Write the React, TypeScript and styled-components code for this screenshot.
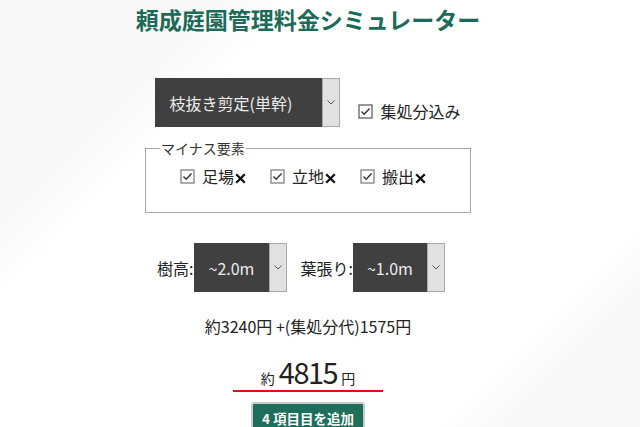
import React from "react";
import styled, { createGlobalStyle } from "styled-components";

const Global = createGlobalStyle`
  html, body {
    margin: 0;
    padding: 0;
    min-height: 100vh;
    background: linear-gradient(135deg, #f8f8f8 0%, #f8f8f8 20%, #ffffff 28%, #ffffff 80%, #f8f8f8 87%, #f8f8f8 100%);
    font-family: "Noto Sans CJK JP", "Noto Sans", sans-serif;
    color: #222;
  }
`;

const Page = styled.div`
  width: 616px;
  display: flex;
  flex-direction: column;
  align-items: center;
  padding-top: 6px;
`;

const Title = styled.h1`
  margin: 0;
  font-size: 23px;
  line-height: 26px;
  font-weight: 700;
  color: #1c6a58;
  letter-spacing: 0;
`;

const Row = styled.div<{ $top: number; $align?: string; $padRight?: number }>`
  display: flex;
  align-items: ${(p) => p.$align ?? "center"};
  margin-top: ${(p) => p.$top}px;
  padding-right: ${(p) => p.$padRight ?? 0}px;
`;

const SelectBox = styled.div<{ $w: number }>`
  display: flex;
  height: 49px;
  width: ${(p) => p.$w}px;
`;

const SelectValue = styled.div<{ $pad: number }>`
  flex: 1;
  background: #404040;
  color: #ececec;
  font-size: 16px;
  display: flex;
  align-items: center;
  padding-left: ${(p) => p.$pad}px;
  white-space: nowrap;
`;

const Arrow = styled.div`
  width: 16px;
  background: #e1e1e1;
  border: 1px solid #a9a9a9;
  display: flex;
  align-items: center;
  justify-content: center;
`;

const Chevron = () => (
  <svg width="8" height="5" viewBox="0 0 8 5">
    <polyline points="0.5,0.5 4,4 7.5,0.5" fill="none" stroke="#555" strokeWidth="1" />
  </svg>
);

const Select = ({ value, w, pad }: { value: string; w: number; pad: number }) => (
  <SelectBox $w={w}>
    <SelectValue $pad={pad}>{value}</SelectValue>
    <Arrow>
      <Chevron />
    </Arrow>
  </SelectBox>
);

const CheckLabel = styled.label<{ $ml?: number; $mb?: number }>`
  display: flex;
  align-items: center;
  gap: 7px;
  font-size: 16px;
  color: #222;
  margin-left: ${(p) => p.$ml ?? 0}px;
  margin-bottom: ${(p) => p.$mb ?? 0}px;
  white-space: nowrap;
`;

const BoxSvg = styled.svg`
  flex-shrink: 0;
  width: 15px;
  height: 15px;
  display: block;
`;

const Box = ({ color }: { color: string }) => (
  <BoxSvg viewBox="0 0 15 15">
    <rect x="1" y="1" width="13" height="13" fill="#fff" stroke={color} strokeWidth="1.2" />
    <polyline points="3.5,7.5 6.2,10.2 11.5,4.5" fill="none" stroke="#333" strokeWidth="1.4" />
  </BoxSvg>
);

const CrossSvg = styled.svg`
  width: 11px;
  height: 11px;
  margin-left: 1px;
  vertical-align: -1px;
`;

const Cross = () => (
  <CrossSvg viewBox="0 0 11 11">
    <path d="M1.2 1.2 L9.8 9.8 M9.8 1.2 L1.2 9.8" stroke="#111" strokeWidth="2.3" strokeLinecap="butt" />
  </CrossSvg>
);

const FieldSet = styled.fieldset`
  margin: 14px 0 0 0;
  width: 326px;
  box-sizing: border-box;
  height: 72px;
  border: 1px solid #a8a8a8;
  padding: 0;
`;

const Legend = styled.legend`
  font-size: 14px;
  color: #333;
  padding: 0 1px;
  margin-left: 14px;
  line-height: 14px;
`;

const Items = styled.div`
  display: flex;
  gap: 24px;
  margin: 9px 0 0 34px;
`;

const FieldLabel = styled.span<{ $ml?: number }>`
  font-size: 16px;
  color: #222;
  margin-left: ${(p) => p.$ml ?? 0}px;
  white-space: nowrap;
`;

const Breakdown = styled.div`
  margin-top: 22px;
  font-size: 16px;
  color: #222;
`;

const Total = styled.div`
  margin-top: 16px;
  width: 150px;
  display: flex;
  align-items: baseline;
  justify-content: center;
  gap: 4px;
  border-bottom: 2px solid #dd1111;
  padding-bottom: 2px;
  color: #222;
`;

const Small = styled.span`
  font-size: 14px;
`;

const Big = styled.span`
  font-size: 29px;
  line-height: 34px;
  font-weight: 400;
  letter-spacing: -1.5px;
  font-family: "Noto Sans CJK JP", sans-serif;
`;

const AddButton = styled.button`
  margin-top: 10px;
  background: #1d6e5b;
  color: #fff;
  font-family: "Noto Sans CJK JP", sans-serif;
  font-weight: 700;
  font-size: 13.5px;
  border: 2px solid #c8ccca;
  border-radius: 3px;
  padding: 4px 9px 6px;
  white-space: nowrap;
`;

export default function App() {
  return (
    <>
      <Global />
      <Page>
        <Title>頼成庭園管理料金シミュレーター</Title>
        <Row $top={46} $align="flex-end">
          <Select value="枝抜き剪定(単幹)" w={185} pad={14} />
          <CheckLabel $ml={18} $mb={4}>
            <Box color="#555" />
            集処分込み
          </CheckLabel>
        </Row>
        <FieldSet>
          <Legend>マイナス要素</Legend>
          <Items>
            <CheckLabel>
              <Box color="#777" />
              <FieldLabel>
                足場<Cross />
              </FieldLabel>
            </CheckLabel>
            <CheckLabel>
              <Box color="#777" />
              <FieldLabel>
                立地<Cross />
              </FieldLabel>
            </CheckLabel>
            <CheckLabel>
              <Box color="#777" />
              <FieldLabel>
                搬出<Cross />
              </FieldLabel>
            </CheckLabel>
          </Items>
        </FieldSet>
        <Row $top={30} $padRight={14}>
          <FieldLabel>樹高:</FieldLabel>
          <Select value="~2.0m" w={93} pad={15} />
          <FieldLabel $ml={14}>葉張り:</FieldLabel>
          <Select value="~1.0m" w={92} pad={14} />
        </Row>
        <Breakdown>約3240円 +(集処分代)1575円</Breakdown>
        <Total>
          <Small>約</Small>
          <Big>4815</Big>
          <Small>円</Small>
        </Total>
        <AddButton>4 項目目を追加</AddButton>
      </Page>
    </>
  );
}
